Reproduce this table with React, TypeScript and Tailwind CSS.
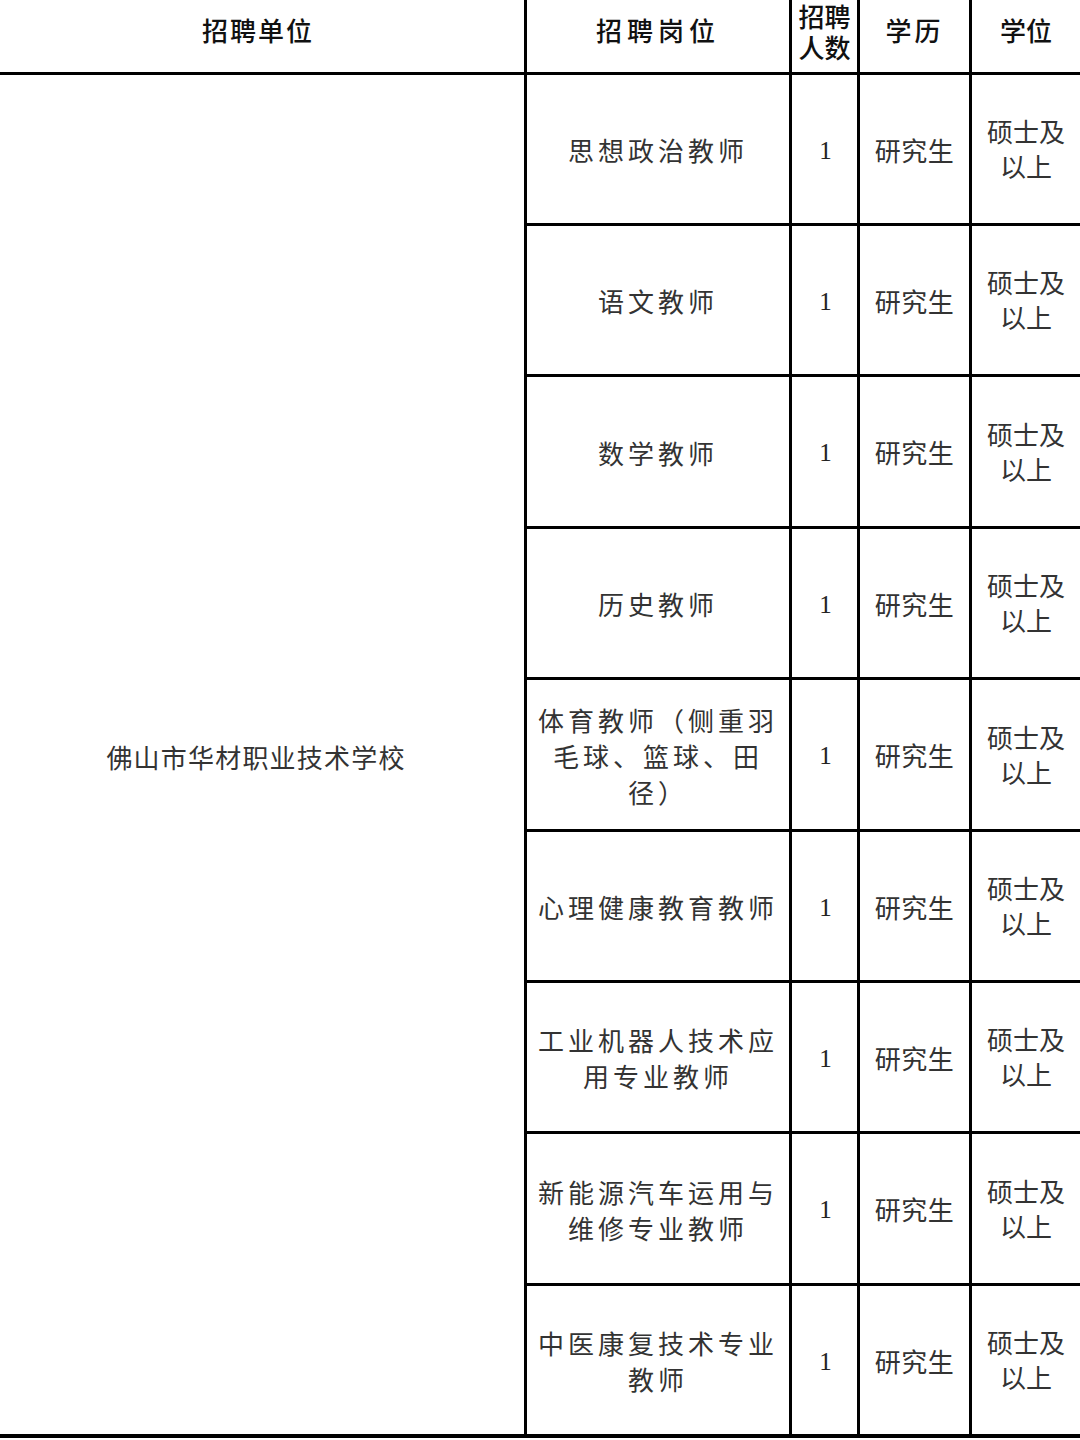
import React from "react";

const cjk = { fontFamily: '"Noto Sans CJK SC", "Noto Sans", sans-serif' };

const rows: string[][] = [
  ["思想政治教师"],
  ["语文教师"],
  ["数学教师"],
  ["历史教师"],
  ["体育教师（侧重羽", "毛球、篮球、田", "径）"],
  ["心理健康教育教师"],
  ["工业机器人技术应", "用专业教师"],
  ["新能源汽车运用与", "维修专业教师"],
  ["中医康复技术专业", "教师"],
];

export default function App() {
  return (
    <div className="w-[1080px] h-[1440px] bg-white overflow-hidden" style={cjk}>
      <div className="grid grid-cols-[524px_262px_65px_109px_108px] grid-rows-[72px_148px_148px_149px_148px_149px_148px_148px_149px_148px] gap-[3px] bg-black pb-[4px] w-[1080px]">
        {/* header */}
        <div className="bg-white flex items-center justify-center pb-[12px] pr-[8px] text-[26px] leading-[32px] font-medium text-[#111] tracking-[2px]">
          招聘单位
        </div>
        <div className="bg-white flex items-center justify-center pb-[12px] text-[26px] leading-[32px] font-medium text-[#111] tracking-[5px]">
          招聘岗位
        </div>
        <div className="bg-white flex flex-col items-center justify-center pb-[10px] text-[26px] leading-[31px] font-medium text-[#111] overflow-hidden">
          <span>招聘</span>
          <span>人数</span>
        </div>
        <div className="bg-white flex items-center justify-center pb-[12px] text-[26px] leading-[32px] font-medium text-[#111] tracking-[3px]">
          学历
        </div>
        <div className="bg-white flex items-center justify-center pb-[12px] text-[26px] leading-[32px] font-medium text-[#111]">
          学位
        </div>

        {/* unit cell spanning all rows */}
        <div className="bg-white row-start-2 row-end-[11] col-start-1 flex items-center justify-center pt-[4px] pr-[12px] text-[26px] text-[#333] tracking-[1.2px]">
          佛山市华材职业技术学校
        </div>

        {rows.map((lines, i) => (
          <React.Fragment key={i}>
            <div className="bg-white col-start-2 flex flex-col items-center justify-center text-[26px] leading-[36px] text-[#333] tracking-[4px] pt-[2px]">
              {lines.map((l, j) => (
                <span key={j} className="whitespace-nowrap">
                  {l}
                </span>
              ))}
            </div>
            <div
              className="bg-white col-start-3 flex items-center justify-center text-[25px] text-[#222] pt-[3px] pl-[2px]"
              style={{ fontFamily: '"Liberation Serif", serif' }}
            >
              1
            </div>
            <div className="bg-white col-start-4 flex items-center justify-center text-[26px] text-[#333] tracking-[0.5px]">
              研究生
            </div>
            <div className="bg-white col-start-5 flex flex-col items-center justify-center text-[26px] leading-[35px] text-[#333] pb-[2px]">
              <span>硕士及</span>
              <span>以上</span>
            </div>
          </React.Fragment>
        ))}
      </div>
    </div>
  );
}
